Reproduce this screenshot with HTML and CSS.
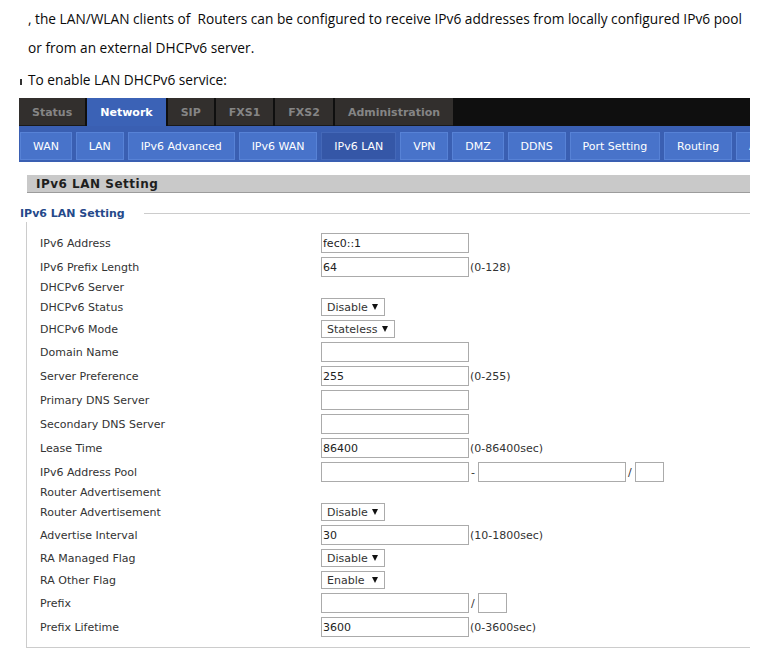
FILE: index.html
```html
<!DOCTYPE html>
<html>
<head>
<meta charset="utf-8">
<title>IPv6 LAN Setting</title>
<link rel="stylesheet" href="styles.css">
</head>
<body>
<div class="page">
  <p class="intro-text">, the LAN/WLAN clients of&nbsp; Routers can be configured to receive IPv6 addresses from locally configured IPv6 pool<br>or from an external DHCPv6 server.</p>
  <p class="intro-step"><span class="bullet-mark"></span>To enable LAN DHCPv6 service:</p>

  <div class="ui">
    <nav class="main-tabs">
      <span class="main-tab">Status</span>
      <span class="main-tab active">Network</span>
      <span class="main-tab">SIP</span>
      <span class="main-tab">FXS1</span>
      <span class="main-tab">FXS2</span>
      <span class="main-tab">Administration</span>
    </nav>
    <nav class="sub-tabs">
      <span class="sub-tab">WAN</span>
      <span class="sub-tab">LAN</span>
      <span class="sub-tab">IPv6 Advanced</span>
      <span class="sub-tab">IPv6 WAN</span>
      <span class="sub-tab active">IPv6 LAN</span>
      <span class="sub-tab">VPN</span>
      <span class="sub-tab">DMZ</span>
      <span class="sub-tab">DDNS</span>
      <span class="sub-tab">Port Setting</span>
      <span class="sub-tab">Routing</span>
      <span class="sub-tab last">A</span>
    </nav>

    <div class="section-title">IPv6 LAN Setting</div>

    <div class="group">
      <div class="group-head"><span class="legend">IPv6 LAN Setting</span><span class="rule"></span></div>
      <div class="group-body">
        <div class="row"><span class="label">IPv6 Address</span><input class="field" type="text" value="fec0::1"></div>
        <div class="row"><span class="label">IPv6 Prefix Length</span><input class="field" type="text" value="64"><span class="hint">(0-128)</span></div>
        <div class="row head"><span class="label">DHCPv6 Server</span></div>
        <div class="row sel"><span class="label">DHCPv6 Status</span><span class="select"><span>Disable</span><span class="arrow"></span></span></div>
        <div class="row sel"><span class="label">DHCPv6 Mode</span><span class="select wide"><span>Stateless</span><span class="arrow"></span></span></div>
        <div class="row"><span class="label">Domain Name</span><input class="field" type="text" value=""></div>
        <div class="row"><span class="label">Server Preference</span><input class="field" type="text" value="255"><span class="hint">(0-255)</span></div>
        <div class="row"><span class="label">Primary DNS Server</span><input class="field" type="text" value=""></div>
        <div class="row"><span class="label">Secondary DNS Server</span><input class="field" type="text" value=""></div>
        <div class="row"><span class="label">Lease Time</span><input class="field" type="text" value="86400"><span class="hint">(0-86400sec)</span></div>
        <div class="row"><span class="label">IPv6 Address Pool</span><input class="field" type="text" value=""><span class="sep">-</span><input class="field" type="text" value=""><span class="sep">/</span><input class="field small" type="text" value=""></div>
        <div class="row head"><span class="label">Router Advertisement</span></div>
        <div class="row sel"><span class="label">Router Advertisement</span><span class="select"><span>Disable</span><span class="arrow"></span></span></div>
        <div class="row"><span class="label">Advertise Interval</span><input class="field" type="text" value="30"><span class="hint">(10-1800sec)</span></div>
        <div class="row sel"><span class="label">RA Managed Flag</span><span class="select"><span>Disable</span><span class="arrow"></span></span></div>
        <div class="row sel"><span class="label">RA Other Flag</span><span class="select"><span>Enable</span><span class="arrow"></span></span></div>
        <div class="row"><span class="label">Prefix</span><input class="field" type="text" value=""><span class="sep">/</span><input class="field small" type="text" value=""></div>
        <div class="row"><span class="label">Prefix Lifetime</span><input class="field" type="text" value="3600"><span class="hint">(0-3600sec)</span></div>
      </div>
    </div>
  </div>
</div>
</body>
</html>
```

FILE: styles.css
```css
html, body {
  margin: 0;
  padding: 0;
  background: #ffffff;
}

.page {
  width: 772px;
  overflow: hidden;
}

.intro-text {
  margin: 0;
  padding: 4px 0 0 28px;
  font-family: "Open Sans", "Liberation Sans", sans-serif;
  font-size: 13.7px;
  line-height: 29px;
  color: #0a0a0a;
  white-space: nowrap;
}

.intro-step {
  margin: 4px 0 0 0;
  padding-left: 20px;
  font-family: "Open Sans", "Liberation Sans", sans-serif;
  font-size: 13.7px;
  line-height: 28px;
  color: #0a0a0a;
  display: flex;
  align-items: center;
}

.bullet-mark {
  display: inline-block;
  width: 2px;
  height: 6px;
  background: #333333;
  margin-right: 6px;
  margin-top: 3px;
}

.ui {
  margin: 4px 0 0 19px;
  width: 731px;
  overflow: hidden;
}

/* main tabs */
.main-tabs {
  display: flex;
  gap: 2px;
  height: 28px;
  background: #0f0f0f;
}

.main-tab {
  padding: 2px 13px 0;
  font-family: "DejaVu Sans", Verdana, sans-serif;
  font-weight: bold;
  font-size: 11px;
  line-height: 25px;
  color: #858585;
  background: #322f2d;
  border-bottom: 1px solid #1a1a1a;
  white-space: nowrap;
}

.main-tab.active {
  background: #3b62b6;
  color: #ffffff;
  border-bottom-color: #3b62b6;
}

/* sub tabs */
.sub-tabs {
  display: flex;
  gap: 4px;
  padding: 6px 0 2px 1px;
  background: #3a5fb2;
  white-space: nowrap;
}

.sub-tab {
  flex: none;
  padding: 2px 11.9px 0;
  font-family: "DejaVu Sans", Tahoma, sans-serif;
  font-size: 11px;
  line-height: 24px;
  color: #ffffff;
  background: #4873ca;
  border: 1px solid #5782d6;
}

.sub-tab.active {
  background: #3557a7;
  border-color: #4468b8;
}

.sub-tab.last {
  padding-right: 4px;
}

/* section title bar */
.section-title {
  margin: 13px 0 0 8px;
  height: 17px;
  padding-left: 9px;
  background: #c9c9c9;
  border-bottom: 1px solid #9c9c9c;
  font-family: "DejaVu Sans", Verdana, sans-serif;
  font-weight: bold;
  font-size: 12px;
  line-height: 18px;
  letter-spacing: 0.5px;
  color: #1e1e1e;
}

/* fieldset-like group */
.group {
  margin: 11px 0 0 1px;
}

.group-head {
  display: flex;
  align-items: center;
  height: 18px;
}

.legend {
  font-family: "DejaVu Sans", Verdana, sans-serif;
  font-weight: bold;
  font-size: 11px;
  color: #25498a;
  white-space: nowrap;
}

.rule {
  flex: 1;
  margin-left: 19px;
  border-top: 1px solid #cccccc;
}

.group-body {
  margin-left: 6px;
  padding: 9px 0 8px 13px;
  border-left: 1px solid #cccccc;
  border-bottom: 1px solid #cccccc;
}

.row {
  display: flex;
  align-items: center;
  height: 24px;
  font-family: "DejaVu Sans", Tahoma, sans-serif;
  font-size: 11px;
  color: #333333;
}

.row.sel {
  height: 22px;
}

.row.head {
  height: 17px;
}

.label {
  flex: none;
  width: 281px;
  white-space: nowrap;
}

.field {
  box-sizing: border-box;
  width: 148px;
  height: 20px;
  margin: 0;
  padding: 0 1px;
  border: 1px solid #ababab;
  border-radius: 0;
  background: #ffffff;
  font-family: "DejaVu Sans", Tahoma, sans-serif;
  font-size: 11px;
  color: #222222;
  outline: none;
}

.field.small {
  width: 29px;
}

.hint {
  margin-left: 1px;
  white-space: nowrap;
}

.sep {
  flex: none;
  width: 7px;
  padding-left: 2px;
}

.select {
  box-sizing: border-box;
  display: inline-flex;
  align-items: center;
  justify-content: space-between;
  width: 64px;
  height: 18px;
  padding: 0 6px 0 5px;
  border: 1px solid #ababab;
  background: #ffffff;
  color: #333333;
}

.select.wide {
  width: 74px;
}

.arrow {
  width: 0;
  height: 0;
  border-left: 3px solid transparent;
  border-right: 3px solid transparent;
  border-top: 6px solid #111111;
}
```
